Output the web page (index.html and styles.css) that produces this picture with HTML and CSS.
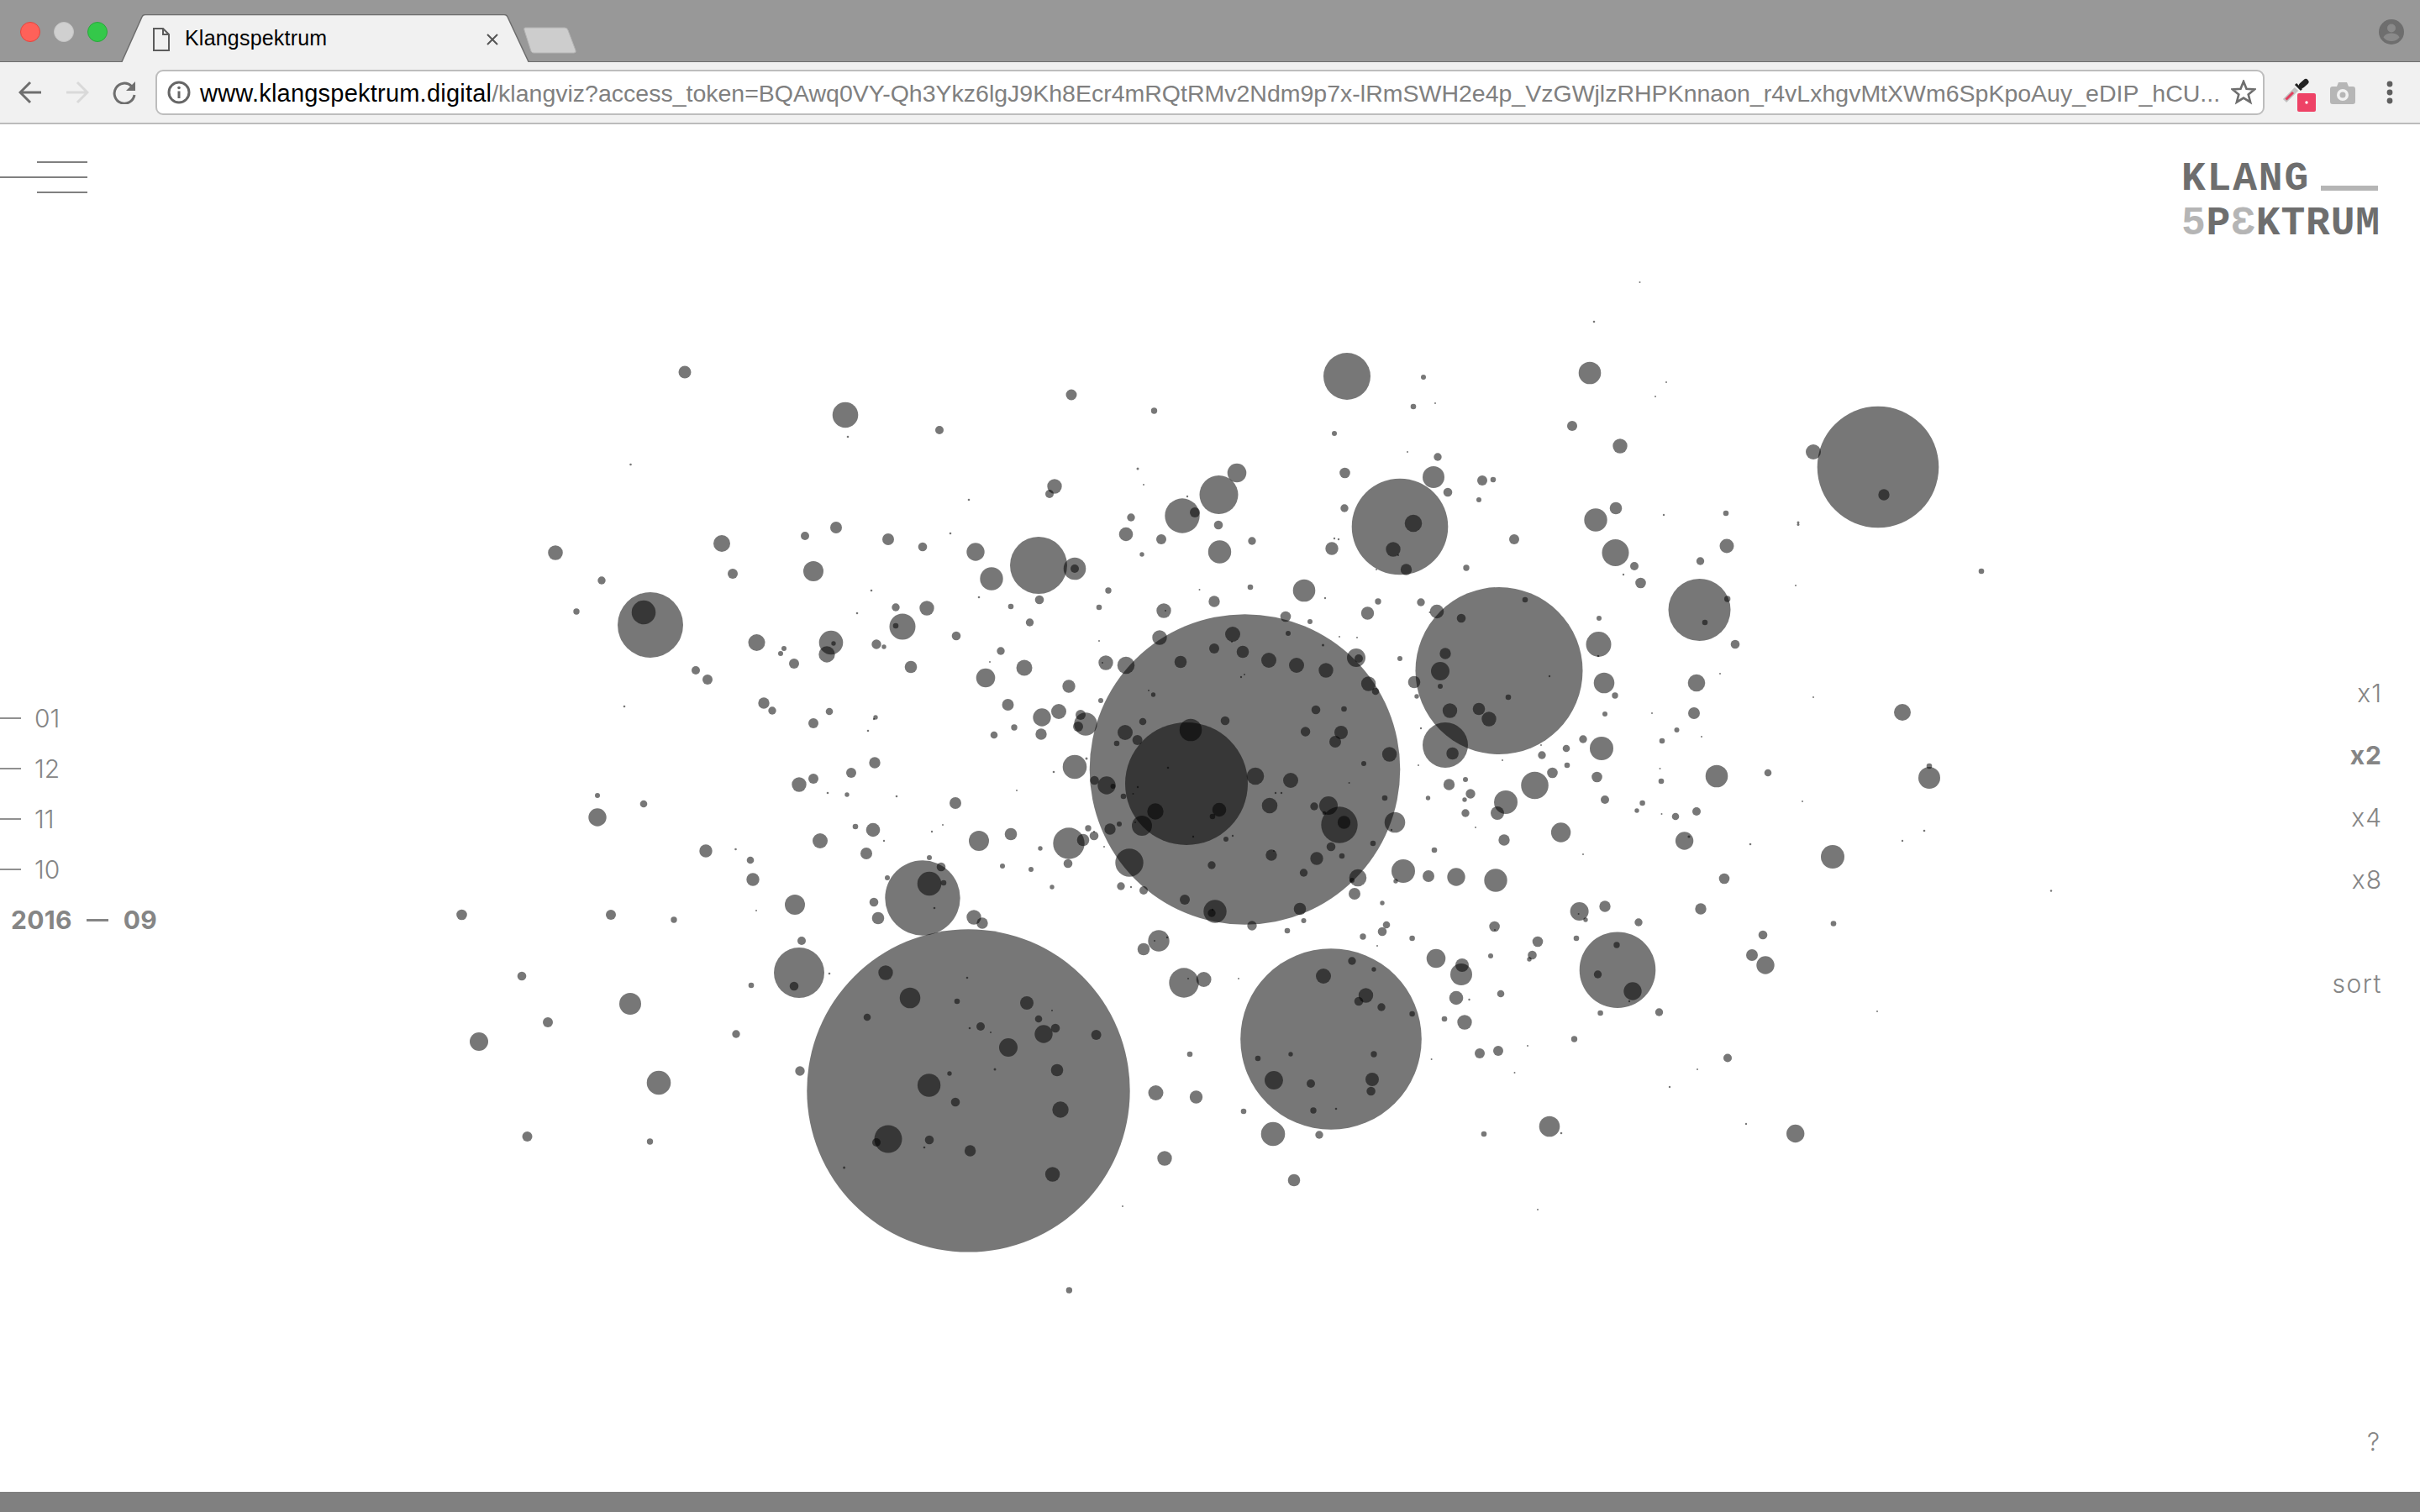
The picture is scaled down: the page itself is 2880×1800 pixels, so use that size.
FILE: index.html
```html
<!DOCTYPE html>
<html lang="en">
<head>
<meta charset="utf-8">
<title>Klangspektrum</title>
<link rel="stylesheet" href="styles.css">
</head>
<body>
<div class="window">
  <header class="tabbar">
    <div class="lights"><span class="light red"></span><span class="light grey"></span><span class="light green"></span></div>
    <div class="tab">
      <svg class="tab-shape" width="544" height="57" viewBox="0 0 544 57">
        <path class="tab-new" d="M481 16H528Q531 16 532 19L541 43Q542 46 539 46H491Q489 46 488 44L480 19Q479 16 481 16Z"/>
        <path class="tab-body" d="M0 57L1 56L25 3Q26 .5 29 .5H456Q459 .5 460 3L485 56L486 57Z"/>
        <path class="tab-edge" d="M0 56.5H1L25 3Q26 .5 29 .5H456Q459 .5 460 3L485 56.5H486"/>
      </svg>
      <svg class="tab-page" width="20" height="28" viewBox="0 0 20 28"><path d="M1 1H12L19 8V27H1ZM12 1V8H19"/></svg>
      <span class="tab-title">Klangspektrum</span>
      <svg class="tab-close" width="14" height="14" viewBox="0 0 14 14"><path d="M1 1L13 13M13 1L1 13"/></svg>
    </div>
    <svg class="profile" width="30" height="30" viewBox="0 0 30 30"><circle class="p-disc" cx="15" cy="15" r="15"/><circle class="p-cut" cx="15" cy="10.5" r="5"/><path class="p-cut" d="M5.5 21.5C7 17.5 12 16.5 15 16.5S23 17.5 24.5 21.5C22 24.5 19 26 15 26S8 24.5 5.5 21.5Z"/></svg>
  </header>
  <nav class="toolbar">
    <svg class="nav-icon" width="28" height="28" viewBox="0 0 28 28"><path d="M27 14H3M14 2L2 14L14 26"/></svg>
    <svg class="nav-icon off" width="28" height="28" viewBox="0 0 28 28"><path d="M1 14H25M14 2L26 14L14 26"/></svg>
    <svg class="nav-icon" width="28" height="28" viewBox="0 0 28 28"><path d="M22.5 6.5A12 12 0 1 0 26 17"/><path class="solid" d="M27 1V12H16Z"/></svg>
    <div class="omnibox">
      <svg class="info" width="28" height="28" viewBox="0 0 28 28"><circle cx="14" cy="14" r="12"/><path d="M14 12.5V21"/><circle class="dot" cx="14" cy="8.5" r="1.8"/></svg>
      <span class="url"><b>www.klangspektrum.digital</b>/klangviz?access_token=BQAwq0VY-Qh3Ykz6lgJ9Kh8Ecr4mRQtRMv2Ndm9p7x-lRmSWH2e4p_VzGWjlzRHPKnnaon_r4vLxhgvMtXWm6SpKpoAuy_eDIP_hCU...</span>
      <svg class="star" width="30" height="30" viewBox="0 0 30 30"><path d="M15 2L18.5 10.8L28 11.4L20.7 17.4L23.1 26.7L15 21.6L6.9 26.7L9.3 17.4L2 11.4L11.5 10.8Z"/></svg>
    </div>
    <svg class="ext" width="40" height="40" viewBox="0 0 40 40"><path class="e-glass" d="M3 27L17 13"/><path class="e-red" d="M4.500 25.500L13 17"/><path class="e-bulb" d="M23.500 8.500L28 4.500"/><path class="e-collar" d="M16 7L23 14"/><rect class="e-badge" x="18" y="18" width="22" height="22" rx="2"/><circle class="e-dot" cx="29" cy="29" r="1.700"/></svg>
    <svg class="camera" width="32" height="28" viewBox="0 0 32 28"><path d="M4 6H9L11 1H21L23 6H28Q31 6 31 9V24Q31 27 28 27H4Q1 27 1 24V9Q1 6 4 6Z"/><circle class="c-ring" cx="16" cy="16" r="7"/><circle class="c-core" cx="16" cy="16" r="3.500"/></svg>
    <svg class="kebab" width="8" height="28" viewBox="0 0 8 28"><circle cx="4" cy="4" r="3.400"/><circle cx="4" cy="14" r="3.400"/><circle cx="4" cy="24" r="3.400"/></svg>
  </nav>
  <main class="stage">
    <svg class="bubbles" width="2880" height="1628" viewBox="0 148 2880 1628">
      <circle cx="815" cy="443" r="7.500"/><circle cx="1275" cy="470" r="6.500"/><circle cx="1006" cy="494" r="15.300"/><circle cx="1118" cy="512" r="5"/><circle cx="1009" cy="520" r="1.300"/><circle cx="750.500" cy="553" r="1.300"/><circle cx="1255" cy="579" r="8.700"/><circle cx="1249" cy="588" r="5"/><circle cx="1153" cy="595" r="1.300"/><circle cx="995" cy="628" r="7"/><circle cx="958" cy="638" r="5"/><circle cx="859" cy="647" r="10"/><circle cx="661" cy="658" r="8.800"/><circle cx="1057" cy="642" r="7"/><circle cx="1098" cy="651" r="5.300"/><circle cx="1131" cy="635" r="1.300"/><circle cx="1161" cy="657" r="10.700"/><circle cx="1236" cy="673" r="34"/><circle cx="1279" cy="677" r="13.300"/><circle cx="1279" cy="677" r="5"/><circle cx="1180" cy="689" r="13.700"/><circle cx="968" cy="680" r="12"/><circle cx="872" cy="683" r="6"/><circle cx="716" cy="691" r="4.700"/><circle cx="1037" cy="703" r="1.300"/><circle cx="1165" cy="711" r="1.300"/><circle cx="1237" cy="714" r="5.300"/><circle cx="1203" cy="722" r="3.300"/><circle cx="1066" cy="723" r="4.700"/><circle cx="1103" cy="724" r="8.700"/><circle cx="1020" cy="730" r="1.300"/><circle cx="1225.500" cy="741" r="4.700"/><circle cx="774" cy="744" r="39"/><circle cx="766" cy="729" r="14.300"/><circle cx="686" cy="728" r="3.700"/><circle cx="1074" cy="746" r="15.500"/><circle cx="1066" cy="745" r="3.300"/><circle cx="1138" cy="757" r="5.300"/><circle cx="900.500" cy="765" r="10"/><circle cx="933" cy="772" r="3"/><circle cx="929" cy="778" r="3"/><circle cx="989" cy="765" r="14.300"/><circle cx="992" cy="766" r="2.700"/><circle cx="984" cy="779" r="9.700"/><circle cx="1043" cy="767" r="5.700"/><circle cx="1052" cy="770" r="2.700"/><circle cx="1191" cy="775" r="4.700"/><circle cx="945" cy="790" r="6"/><circle cx="1178" cy="788" r="1"/><circle cx="1084" cy="794" r="7.300"/><circle cx="1219" cy="795" r="9.500"/>
      <circle cx="1173" cy="807" r="11.300"/><circle cx="828" cy="798" r="5"/><circle cx="842" cy="809" r="6"/><circle cx="1272" cy="817" r="7.700"/><circle cx="909" cy="837" r="6.700"/><circle cx="919" cy="846" r="4.700"/><circle cx="987" cy="847" r="4.300"/><circle cx="743" cy="841" r="1.300"/><circle cx="1199.500" cy="839" r="7"/><circle cx="968" cy="861" r="6"/><circle cx="1042" cy="854" r="2.700"/><circle cx="1040" cy="856" r="1.200"/><circle cx="1033" cy="870" r="1.300"/><circle cx="1240" cy="854" r="10.700"/><circle cx="1260" cy="847" r="9"/><circle cx="1286" cy="851" r="6"/><circle cx="1292" cy="862" r="13.700"/><circle cx="1283" cy="865" r="6"/><circle cx="1207" cy="866" r="3.700"/><circle cx="1183" cy="875" r="4.300"/><circle cx="1239" cy="874" r="6.700"/><circle cx="1041" cy="908" r="6.700"/><circle cx="1013" cy="920" r="6"/><circle cx="968" cy="927" r="6"/><circle cx="951" cy="934" r="8.700"/><circle cx="985" cy="944" r="1.300"/><circle cx="1008" cy="946" r="2.700"/><circle cx="1067" cy="948" r="1.300"/><circle cx="1137" cy="956" r="7"/><circle cx="1210" cy="941" r="1"/><circle cx="1279" cy="913" r="14.300"/><circle cx="1293" cy="903" r="1.500"/><circle cx="1254" cy="919" r="1.300"/><circle cx="711" cy="947" r="3"/><circle cx="766" cy="957" r="4.300"/><circle cx="711" cy="973" r="10.700"/><circle cx="1018" cy="984" r="3.300"/><circle cx="1039" cy="988" r="8.300"/><circle cx="1122" cy="982" r="1"/><circle cx="1109" cy="990" r="1.200"/><circle cx="1052" cy="1001" r="1.200"/><circle cx="976" cy="1001" r="9"/><circle cx="1165" cy="1001" r="12"/><circle cx="1203" cy="993" r="7.300"/><circle cx="1272" cy="1004" r="18.700"/><circle cx="1289" cy="1000" r="7.300"/><circle cx="1295" cy="986" r="3.700"/><circle cx="1238" cy="1010" r="2.700"/><circle cx="1031" cy="1016" r="7"/><circle cx="840" cy="1013" r="7.700"/><circle cx="875.500" cy="1011" r="1.300"/><circle cx="893" cy="1024" r="4.300"/><circle cx="896" cy="1047" r="7.700"/><circle cx="1106" cy="1021" r="3"/><circle cx="1120" cy="1032" r="5.300"/><circle cx="1098" cy="1069" r="44.700"/><circle cx="1106" cy="1052" r="14.300"/><circle cx="1123" cy="1051" r="3.300"/><circle cx="1056" cy="1045" r="3"/><circle cx="1193" cy="1031" r="3"/><circle cx="1227" cy="1035" r="3"/><circle cx="1271" cy="1028" r="5.300"/><circle cx="1252" cy="1056" r="2.700"/><circle cx="1040" cy="1074" r="5.300"/><circle cx="1112" cy="1081" r="1.300"/><circle cx="1045" cy="1093" r="7.300"/><circle cx="1159" cy="1092" r="8.700"/><circle cx="1169" cy="1099" r="6.700"/><circle cx="946" cy="1077" r="12"/><circle cx="900" cy="1084" r="1"/><circle cx="549.500" cy="1089" r="6.300"/><circle cx="727" cy="1089" r="6"/><circle cx="802" cy="1095" r="3.700"/><circle cx="954" cy="1120" r="5"/><circle cx="951" cy="1158" r="30"/><circle cx="945" cy="1174" r="5.300"/><circle cx="987" cy="1159" r="1.300"/><circle cx="894" cy="1173" r="3.300"/><circle cx="621" cy="1162" r="5.300"/><circle cx="750" cy="1195" r="13"/><circle cx="652" cy="1217" r="6"/><circle cx="570" cy="1240" r="11"/><circle cx="876" cy="1231" r="4.700"/><circle cx="952" cy="1275" r="5.700"/><circle cx="784" cy="1289" r="14.300"/><circle cx="627.500" cy="1353" r="6"/><circle cx="773.500" cy="1359" r="3.700"/><circle cx="1272.400" cy="1536" r="3.700"/>
      <circle cx="1152.500" cy="1298.400" r="192.200"/><circle cx="1054" cy="1158" r="8.700"/><circle cx="1083" cy="1188" r="12.300"/><circle cx="1032" cy="1211" r="4.300"/><circle cx="1151" cy="1164" r="1.300"/><circle cx="1139" cy="1192" r="3.300"/><circle cx="1222" cy="1194" r="8"/><circle cx="1252" cy="1203" r="1"/><circle cx="1236" cy="1213" r="4.300"/><circle cx="1256" cy="1224" r="5.300"/><circle cx="1242" cy="1231" r="10.700"/><circle cx="1167" cy="1222" r="5"/><circle cx="1154" cy="1224" r="1.300"/><circle cx="1179" cy="1229" r="1"/><circle cx="1200" cy="1247" r="11"/><circle cx="1258" cy="1274" r="7.300"/><circle cx="1184" cy="1273" r="1.500"/><circle cx="1130" cy="1278" r="2.700"/><circle cx="1105.600" cy="1292" r="13.700"/><circle cx="1137" cy="1312" r="5.300"/><circle cx="1262" cy="1321" r="9.700"/><circle cx="1057" cy="1356" r="16.500"/><circle cx="1043" cy="1360" r="5"/><circle cx="1106" cy="1357" r="5.300"/><circle cx="1100" cy="1366" r="1.300"/><circle cx="1154.600" cy="1370" r="6.700"/><circle cx="1004.600" cy="1390" r="1.500"/><circle cx="1252.600" cy="1398" r="8.700"/><circle cx="1304.600" cy="1232" r="6"/>
      <circle cx="1373.500" cy="489" r="3.700"/><circle cx="1603" cy="448" r="28"/><circle cx="1694" cy="449" r="3"/><circle cx="1682" cy="484" r="3.300"/><circle cx="1708" cy="480" r="1"/><circle cx="1892" cy="444" r="13.300"/><circle cx="1951.500" cy="336" r="1"/><circle cx="1897" cy="383" r="1.300"/><circle cx="1983" cy="455" r="1"/><circle cx="1970" cy="472" r="1"/><circle cx="1871" cy="507" r="6"/><circle cx="1928" cy="531" r="8.700"/><circle cx="1588" cy="516" r="3"/><circle cx="1354" cy="558" r="1.500"/><circle cx="1361" cy="577" r="1"/><circle cx="1472" cy="563" r="11.300"/><circle cx="1450.500" cy="589" r="23"/><circle cx="1413" cy="591" r="1.200"/><circle cx="1407" cy="614" r="20.700"/><circle cx="1422" cy="610" r="6"/><circle cx="1346" cy="616" r="4.700"/><circle cx="1340" cy="636" r="8.300"/><circle cx="1382" cy="642" r="6"/><circle cx="1450" cy="625" r="5.300"/><circle cx="1490" cy="644" r="4.700"/><circle cx="1451.500" cy="657" r="13.700"/><circle cx="1359" cy="660" r="2.700"/><circle cx="1675" cy="538" r="1"/><circle cx="1711" cy="544" r="4.700"/><circle cx="1706" cy="568" r="13"/><circle cx="1723" cy="586" r="5.300"/><circle cx="1600.500" cy="563" r="6.300"/><circle cx="1764" cy="572" r="6"/><circle cx="1777" cy="571" r="3.300"/><circle cx="1760" cy="595" r="3"/><circle cx="1666" cy="627" r="57.300"/><circle cx="1682" cy="623" r="10.300"/><circle cx="1658" cy="654" r="8.700"/><circle cx="1664" cy="661" r="1"/><circle cx="1673.500" cy="678" r="6.700"/><circle cx="1600" cy="605" r="4.700"/><circle cx="1588" cy="641" r="1.200"/><circle cx="1593" cy="642" r="1.200"/><circle cx="1585" cy="653" r="7.700"/><circle cx="1638" cy="678" r="1"/><circle cx="1745" cy="676" r="3.700"/><circle cx="1802" cy="642" r="6"/><circle cx="1899" cy="619" r="13.700"/><circle cx="1923" cy="605" r="7.300"/><circle cx="1980" cy="613" r="1.200"/><circle cx="1922.500" cy="658" r="16"/><circle cx="1945" cy="674" r="5"/><circle cx="1932" cy="684" r="1.200"/><circle cx="1952.500" cy="694" r="6.300"/><circle cx="2023.500" cy="668" r="4.700"/><circle cx="2022.500" cy="726" r="37"/><circle cx="2029" cy="741" r="3.300"/><circle cx="1319" cy="703" r="3.700"/><circle cx="1308" cy="723" r="3.300"/><circle cx="1427.500" cy="702" r="1"/><circle cx="1488" cy="699" r="3.300"/><circle cx="1552" cy="703" r="13.300"/><circle cx="1577" cy="712" r="1.200"/><circle cx="1445" cy="716" r="6.700"/><circle cx="1385" cy="727" r="8.700"/><circle cx="1387" cy="727" r="1"/><circle cx="1530" cy="734" r="6.300"/><circle cx="1559" cy="740" r="3"/><circle cx="1640" cy="716" r="3.700"/><circle cx="1627.500" cy="730" r="7.700"/><circle cx="1691" cy="717" r="4.700"/><circle cx="1710" cy="728" r="8.300"/><circle cx="1701.500" cy="729" r="1"/><circle cx="1739" cy="736" r="5.300"/><circle cx="1815" cy="714" r="3.300"/><circle cx="1903" cy="736" r="3"/><circle cx="1902.500" cy="767" r="15"/><circle cx="1902" cy="781" r="1.300"/><circle cx="1308" cy="763" r="1"/><circle cx="1533" cy="754" r="3"/><circle cx="1467" cy="755" r="9"/><circle cx="1466" cy="764" r="1"/><circle cx="1445" cy="772" r="6"/><circle cx="1479" cy="776" r="7.300"/><circle cx="1380" cy="759" r="8.700"/><circle cx="1574.500" cy="768" r="1.600"/><circle cx="1594" cy="758" r="1"/><circle cx="1615" cy="759" r="1"/><circle cx="1614" cy="783" r="11"/><circle cx="1617" cy="784" r="5"/><circle cx="1405" cy="788" r="7.300"/><circle cx="1510" cy="786" r="9"/><circle cx="1543" cy="792" r="9"/><circle cx="1578" cy="798" r="8.700"/><circle cx="1316" cy="789" r="8.700"/><circle cx="1312" cy="789" r="1"/><circle cx="1340" cy="792" r="10.300"/><circle cx="1666" cy="784" r="3"/><circle cx="1720" cy="778" r="6.700"/><circle cx="1714" cy="799" r="11"/>
      <circle cx="1481.500" cy="916" r="184.800"/><circle cx="1784" cy="798.500" r="99.500"/><circle cx="1310" cy="834" r="3"/><circle cx="1367" cy="822" r="1"/><circle cx="1372.500" cy="827" r="2.700"/><circle cx="1481" cy="803" r="1"/><circle cx="1477" cy="806" r="1.200"/><circle cx="1628.600" cy="814" r="8.700"/><circle cx="1637" cy="823" r="4.300"/><circle cx="1683" cy="812" r="7.300"/><circle cx="1714" cy="817" r="3"/><circle cx="1686" cy="829" r="2.700"/><circle cx="1844" cy="805" r="1.200"/><circle cx="1795" cy="830" r="3.300"/><circle cx="1725.500" cy="846" r="8.700"/><circle cx="1760" cy="844" r="7.300"/><circle cx="1772" cy="856" r="8.700"/><circle cx="1720" cy="887" r="27"/><circle cx="1728.600" cy="897" r="7.300"/><circle cx="1691" cy="867" r="1.200"/><circle cx="1909" cy="813" r="12.300"/><circle cx="1922" cy="828" r="3.700"/><circle cx="1910" cy="850" r="3"/><circle cx="1966" cy="849" r="1"/><circle cx="2019" cy="813" r="10.300"/><circle cx="2047" cy="802" r="1"/><circle cx="2016" cy="849" r="7"/><circle cx="1995.500" cy="869" r="3"/><circle cx="2025" cy="877" r="1"/><circle cx="1978" cy="882" r="3.300"/><circle cx="1906" cy="891" r="14"/><circle cx="1884" cy="880" r="4.700"/><circle cx="1864" cy="891" r="4.300"/><circle cx="1835" cy="899" r="4.700"/><circle cx="1834" cy="887" r="1"/><circle cx="1865" cy="911" r="3.300"/><circle cx="1847.500" cy="920" r="6.300"/><circle cx="1826.500" cy="935" r="16.300"/><circle cx="1788" cy="905" r="1"/><circle cx="1688" cy="911" r="1"/><circle cx="1724.500" cy="934" r="6.700"/><circle cx="1744" cy="928" r="3"/><circle cx="1750" cy="945" r="5.700"/><circle cx="1743" cy="952" r="2.700"/><circle cx="1699.500" cy="950" r="2.700"/><circle cx="1792" cy="955" r="14"/><circle cx="1782" cy="968" r="8"/><circle cx="1744" cy="968" r="4.700"/><circle cx="1756" cy="985" r="1"/><circle cx="1790" cy="1000" r="6.700"/><circle cx="1857.600" cy="991" r="11.700"/><circle cx="1900.500" cy="925" r="6.300"/><circle cx="1910" cy="952" r="5"/><circle cx="1884" cy="1017" r="1"/><circle cx="1975.500" cy="915" r="1"/><circle cx="1977" cy="930" r="3.300"/><circle cx="1954.600" cy="956" r="3.300"/><circle cx="1948" cy="965" r="2.700"/><circle cx="1977.500" cy="969" r="1"/><circle cx="1994" cy="972" r="4.300"/><circle cx="2019" cy="966" r="5"/><circle cx="2043" cy="924" r="13.300"/><circle cx="2004.600" cy="1001" r="10.700"/><circle cx="2010" cy="996" r="1.600"/><circle cx="1707" cy="1012" r="3.300"/><circle cx="1670" cy="1037" r="14"/><circle cx="1700" cy="1043" r="7"/><circle cx="1733" cy="1044" r="10.700"/><circle cx="1780" cy="1048" r="13.700"/><circle cx="1661" cy="1049" r="2.700"/><circle cx="1616" cy="1045" r="10.300"/><circle cx="1609" cy="1048" r="3"/><circle cx="1612" cy="1064" r="7"/>
      <circle cx="1339" cy="872" r="9"/><circle cx="1360" cy="859" r="4.300"/><circle cx="1353.600" cy="881" r="6"/><circle cx="1329" cy="885" r="3.300"/><circle cx="1458" cy="858" r="5.300"/><circle cx="1417" cy="869" r="13.300"/><circle cx="1566" cy="845" r="5.300"/><circle cx="1599.500" cy="844" r="3.300"/><circle cx="1553.600" cy="871" r="5.700"/><circle cx="1596" cy="872" r="8"/><circle cx="1589" cy="883" r="7"/><circle cx="1653.600" cy="898" r="8.700"/><circle cx="1623" cy="909" r="3"/><circle cx="1605.600" cy="932" r="1"/><circle cx="1412" cy="933" r="73"/><circle cx="1390" cy="914" r="1.300"/><circle cx="1317" cy="935" r="10.700"/><circle cx="1324.500" cy="936" r="3"/><circle cx="1302.500" cy="929" r="5.300"/><circle cx="1494" cy="924" r="10.300"/><circle cx="1536" cy="929" r="9"/><circle cx="1354" cy="937" r="1.200"/><circle cx="1348.500" cy="945" r="1"/><circle cx="1337" cy="948" r="3.300"/><circle cx="1518" cy="944" r="1.200"/><circle cx="1525" cy="944" r="1.200"/><circle cx="1511" cy="959" r="9.300"/><circle cx="1375" cy="966" r="9.700"/><circle cx="1451" cy="964" r="8.300"/><circle cx="1443" cy="972" r="3.300"/><circle cx="1359" cy="983" r="12"/><circle cx="1351" cy="979" r="1"/><circle cx="1332" cy="981" r="3"/><circle cx="1321" cy="987" r="6.700"/><circle cx="1302" cy="995" r="5.300"/><circle cx="1302" cy="990" r="1"/><circle cx="1314" cy="1008" r="1"/><circle cx="1581" cy="959" r="11"/><circle cx="1564" cy="960" r="4.700"/><circle cx="1576" cy="968" r="2.300"/><circle cx="1594" cy="982" r="21.700"/><circle cx="1599.500" cy="979" r="7.700"/><circle cx="1648" cy="950" r="3.300"/><circle cx="1660" cy="979" r="12.300"/><circle cx="1656" cy="988" r="1.200"/><circle cx="1634" cy="1004" r="3.300"/><circle cx="1584" cy="1008" r="5.300"/><circle cx="1597" cy="1019" r="3.300"/><circle cx="1567" cy="1022" r="7.700"/><circle cx="1513" cy="1018" r="6.700"/><circle cx="1516" cy="1013" r="1"/><circle cx="1420" cy="996" r="1.200"/><circle cx="1459" cy="999" r="3"/><circle cx="1467" cy="995" r="1.200"/><circle cx="1442" cy="1030" r="4.700"/><circle cx="1344" cy="1027" r="16.700"/><circle cx="1334" cy="1055" r="4.700"/><circle cx="1346" cy="1056" r="1.200"/><circle cx="1361" cy="1060" r="5"/><circle cx="1410" cy="1071" r="6"/><circle cx="1551.500" cy="1039" r="4.700"/><circle cx="1446" cy="1085" r="13.700"/><circle cx="1442" cy="1087" r="4.700"/><circle cx="1443" cy="1083" r="1.200"/><circle cx="1547" cy="1082" r="7.300"/><circle cx="1490" cy="1102" r="5.700"/><circle cx="1551.500" cy="1096" r="3"/><circle cx="1532" cy="1108" r="3.300"/><circle cx="1645" cy="1075" r="2.700"/><circle cx="1650" cy="1101" r="4.300"/><circle cx="1645" cy="1109" r="5.300"/><circle cx="1622" cy="1115" r="3.700"/><circle cx="1639" cy="1126" r="1"/><circle cx="1680.600" cy="1117" r="3.300"/><circle cx="1379" cy="1120" r="12.700"/><circle cx="1361" cy="1130" r="7.300"/><circle cx="1374" cy="1120" r="1"/><circle cx="1389" cy="1116" r="1.200"/><circle cx="1409" cy="1170" r="17.700"/><circle cx="1432.600" cy="1166" r="9"/><circle cx="1414" cy="1165" r="1"/><circle cx="1474" cy="1165" r="1"/>
      <circle cx="1584" cy="1237" r="107.800"/><circle cx="1609" cy="1144" r="4.700"/><circle cx="1635" cy="1154" r="2.700"/><circle cx="1575" cy="1162" r="9"/><circle cx="1625.500" cy="1185" r="8.700"/><circle cx="1617" cy="1192" r="5.300"/><circle cx="1644" cy="1199" r="4.700"/><circle cx="1680.600" cy="1207" r="3.300"/><circle cx="1635" cy="1255" r="3.700"/><circle cx="1536" cy="1255" r="2.700"/><circle cx="1497" cy="1260" r="3.300"/><circle cx="1516" cy="1286" r="11"/><circle cx="1560" cy="1290" r="5"/><circle cx="1633" cy="1285" r="8"/><circle cx="1631.600" cy="1299" r="5.300"/><circle cx="1563" cy="1322" r="3.700"/><circle cx="1590" cy="1320" r="1.300"/><circle cx="1709" cy="1141" r="11.300"/><circle cx="1740" cy="1149" r="8"/><circle cx="1739" cy="1160" r="13"/><circle cx="1733" cy="1188" r="8.300"/><circle cx="1748.500" cy="1190" r="1.200"/><circle cx="1786" cy="1183" r="4.300"/><circle cx="1719" cy="1213" r="3.300"/><circle cx="1743" cy="1217" r="8.700"/><circle cx="1778.600" cy="1103" r="6.300"/><circle cx="1779" cy="1107" r="1"/><circle cx="1830" cy="1121" r="6.300"/><circle cx="1823.500" cy="1137" r="5.300"/><circle cx="1820" cy="1142" r="2.700"/><circle cx="1774" cy="1138" r="3"/><circle cx="1876" cy="1117" r="3.300"/><circle cx="1879.600" cy="1085" r="11"/><circle cx="1878.600" cy="1088" r="1"/><circle cx="1887" cy="1095" r="2.700"/><circle cx="1910" cy="1079" r="6.700"/><circle cx="1950" cy="1098" r="4.700"/><circle cx="2024" cy="1082" r="6.700"/><circle cx="1925" cy="1154.700" r="45.300"/><circle cx="1924" cy="1125" r="3.700"/><circle cx="1901.500" cy="1160" r="4.700"/><circle cx="1943" cy="1180" r="10.700"/><circle cx="1939" cy="1192" r="1.200"/><circle cx="1904.600" cy="1206" r="3.300"/><circle cx="1974.500" cy="1205" r="4.700"/><circle cx="1873.500" cy="1237" r="3.700"/><circle cx="1818" cy="1245" r="1"/><circle cx="1783" cy="1251" r="6"/><circle cx="1761" cy="1254" r="6"/><circle cx="1703.600" cy="1261" r="1"/><circle cx="1802.500" cy="1277" r="1"/><circle cx="2020" cy="1273" r="1"/><circle cx="1416" cy="1255" r="3.300"/>
      <circle cx="1375.500" cy="1301" r="9"/><circle cx="1423.500" cy="1306" r="7.700"/><circle cx="1480" cy="1323" r="3.300"/><circle cx="1515" cy="1350" r="14.300"/><circle cx="1570" cy="1351" r="4.700"/><circle cx="1386" cy="1379" r="8.700"/><circle cx="1540" cy="1405" r="7.300"/><circle cx="1336" cy="1436" r="1"/><circle cx="1766" cy="1350" r="3.300"/><circle cx="1844" cy="1341" r="12.300"/><circle cx="1858" cy="1349" r="1.300"/><circle cx="1830" cy="1440" r="1"/>
      <circle cx="2158" cy="538" r="9"/><circle cx="2235" cy="556" r="72.300"/><circle cx="2242" cy="589" r="6.700"/><circle cx="2054" cy="611" r="3.300"/><circle cx="2055" cy="650" r="8.500"/><circle cx="2140" cy="622" r="1.500"/><circle cx="2140" cy="624.500" r="1.500"/><circle cx="2137" cy="697" r="1"/><circle cx="2358" cy="680" r="3.300"/><circle cx="2055.700" cy="713" r="3.700"/><circle cx="2065" cy="767" r="5.300"/><circle cx="2158" cy="830" r="1"/><circle cx="2264" cy="848" r="10"/><circle cx="2104" cy="920" r="4.300"/><circle cx="2296" cy="926" r="13"/><circle cx="2296" cy="912" r="3.300"/><circle cx="2145" cy="954" r="1"/><circle cx="2083" cy="1005" r="1.300"/><circle cx="2290" cy="989" r="1.300"/><circle cx="2264" cy="1001" r="1.200"/><circle cx="2181" cy="1020" r="14"/><circle cx="2052" cy="1046" r="6.300"/><circle cx="2441" cy="1060.500" r="1.200"/><circle cx="2182" cy="1099.500" r="3.300"/><circle cx="2098" cy="1113" r="5.300"/><circle cx="2085" cy="1137" r="7"/><circle cx="2101" cy="1149" r="10.700"/><circle cx="2234" cy="1204" r="1"/><circle cx="2056" cy="1259.500" r="5"/><circle cx="1987" cy="1294" r="1.200"/><circle cx="2078" cy="1338" r="1.200"/><circle cx="2136.700" cy="1349.500" r="10.700"/>
    </svg>
    <div class="hud">
      <div class="hud-left">
        <div class="menu"><span class="bar"></span><span class="bar long"></span><span class="bar"></span></div>
        <ul class="months">
          <li class="month"><i class="dash"></i><span class="num">01</span></li>
          <li class="month"><i class="dash"></i><span class="num">12</span></li>
          <li class="month"><i class="dash"></i><span class="num">11</span></li>
          <li class="month"><i class="dash"></i><span class="num">10</span></li>
          <li class="month current"><span>2016</span><i class="dash-bold"></i><span class="num">09</span></li>
        </ul>
      </div>
      <div class="hud-right">
        <div class="logo">
          <div class="logo-line">KLANG<i class="logo-rule"></i></div>
          <div class="logo-line tight"><span class="faint">5</span>P<span class="faint">Ɛ</span>KTRUM</div>
        </div>
        <ul class="speeds">
          <li>x1</li>
          <li class="active">x2</li>
          <li>x4</li>
          <li>x8</li>
        </ul>
        <div class="sort">sort</div>
        <div class="help">?</div>
      </div>
    </div>
  </main>
  <footer class="statusbar"></footer>
</div>
</body>
</html>
```

FILE: styles.css
```css
* { box-sizing: border-box; }
html, body { margin: 0; padding: 0; height: 100%; overflow: hidden; background: #fff; }
.window { display: flex; flex-direction: column; width: 2880px; height: 1800px; font-family: "Liberation Sans", Arial, sans-serif; }

/* title bar */
.tabbar { display: flex; align-items: flex-start; height: 74px; flex: none; background: #989898; box-shadow: inset 0 -1px 0 #6d6d6d; }
.lights { display: flex; gap: 16px; padding: 26px 0 0 24px; width: 144px; flex: none; }
.light { width: 24px; height: 24px; border-radius: 50%; border: 1px solid; }
.red { background: #ff6159; border-color: #e2463f; }
.grey { background: #d0d0d0; border-color: #c4c4c4; }
.green { background: #34c84a; border-color: #2aa83c; }
.tab { position: relative; display: flex; align-items: center; width: 544px; height: 57px; margin-top: 17px; padding: 0 36px 0 38px; flex: none; }
.tab-shape { position: absolute; left: 0; top: 0; }
.tab-new { fill: #cdcdcd; stroke: #b4b4b4; stroke-width: 1; }
.tab-body { fill: #f1f1f1; }
.tab-edge { fill: none; stroke: #6d6d6d; stroke-width: 1.500; }
.tab-page { position: relative; flex: none; margin-top: 2px; }
.tab-page path { fill: none; stroke: #5c5c5c; stroke-width: 2; }
.tab-title { position: relative; margin-left: 18px; font-size: 25px; letter-spacing: .2px; color: #000; flex: 1; white-space: nowrap; }
.tab-close { position: relative; flex: none; margin: 2px 59px 0 0; }
.tab-close path { fill: none; stroke: #555; stroke-width: 2; }
.profile { margin: 23px 19px 0 auto; flex: none; }
.p-disc { fill: #6e6e6e; }
.p-cut { fill: #8a8a8a; }

/* toolbar */
.toolbar { display: flex; align-items: center; height: 74px; flex: none; padding: 0 32px 1px 22px; background: #f1f1f1; border-bottom: 2px solid #bcbcbc; }
.nav-icon { flex: none; margin-right: 28px; }
.nav-icon path { fill: none; stroke: #6e6e6e; stroke-width: 3; }
.nav-icon .solid { fill: #6e6e6e; stroke: none; }
.nav-icon.off path { stroke: #d9d9d9; }
.nav-icon:nth-of-type(3) { margin-right: 23px; }
.omnibox { display: flex; align-items: center; flex: 1; min-width: 0; height: 54px; padding: 0 8px 0 12px; background: #fff; border: 2px solid #bdbdbd; border-radius: 9px; }
.info { flex: none; }
.info circle { fill: none; stroke: #666; stroke-width: 3; }
.info path { fill: none; stroke: #666; stroke-width: 3; }
.info .dot { fill: #666; stroke: none; }
.url { flex: 1; min-width: 0; margin: 3px 0 0 11px; font-size: 28.500px; color: #808080; white-space: nowrap; }
.url b { font-weight: 400; font-size: 29px; letter-spacing: .22px; color: #000; }
.star { flex: none; margin-left: 0; }
.star path { fill: none; stroke: #6e6e6e; stroke-width: 2.600; }
.ext { flex: none; margin: 7px 0 0 21px; }
.e-glass { fill: none; stroke: #c2c2c2; stroke-width: 6; }
.e-red { fill: none; stroke: #e23f5f; stroke-width: 3; }
.e-bulb { fill: none; stroke: #222; stroke-width: 7; stroke-linecap: round; }
.e-collar { fill: none; stroke: #222; stroke-width: 3; }
.e-badge { fill: #ee4266; }
.e-dot { fill: #fff; }
.camera { flex: none; margin: 2px 0 0 16px; }
.camera path { fill: #b6b6b6; }
.c-ring { fill: #f1f1f1; }
.c-core { fill: #b6b6b6; }
.kebab { flex: none; margin-left: 36px; }
.kebab circle { fill: #5f5f5f; }

/* page */
.stage { position: relative; flex: 1; min-height: 0; background: #fff; }
.bubbles { position: absolute; left: 0; top: 0; }
.bubbles circle { fill: #000; fill-opacity: .535; }
.hud { position: relative; display: flex; justify-content: space-between; height: 100%; color: #858585; font-family: Inter, "Liberation Sans", sans-serif; font-weight: 300; font-size: 30px; }
.hud-left { display: flex; flex-direction: column; }
.menu { display: flex; flex-direction: column; align-items: flex-end; gap: 16px; width: 104px; padding-top: 44px; }
.bar { display: block; width: 60px; height: 2px; background: #808080; }
.bar.long { width: 104px; }
.months { list-style: none; margin: 595px 0 0; padding: 0; display: flex; flex-direction: column; }
.month { display: flex; align-items: center; height: 60px; }
.dash { display: block; width: 25px; height: 2px; margin-right: 16px; background: #909090; }
.month.current { padding-left: 13px; font-weight: 700; letter-spacing: .3px; }
.dash-bold { display: block; width: 26px; height: 3px; margin: 0 18px 0 17px; background: #858585; }
.hud-right { display: flex; flex-direction: column; align-items: flex-end; padding-right: 45px; }
.logo { width: 238px; margin: 39px 1px 0 0; font-family: "Liberation Mono", monospace; font-weight: 700; font-size: 48px; line-height: 53px; letter-spacing: 1.800px; color: #6e6e6e; }
.logo-line { display: flex; align-items: center; white-space: nowrap; }
.logo-line.tight { letter-spacing: .8px; }
.faint { color: #b5b5b5; }
.logo-rule { display: block; width: 68px; height: 6px; margin: 20px 0 0 13px; background: #b5b5b5; }
.speeds { list-style: none; margin: 495px 0 0; padding: 0; display: flex; flex-direction: column; align-items: flex-end; gap: 0; }
.speeds li { height: 74px; line-height: 74px; letter-spacing: 1px; }
.speeds .active { font-weight: 700; }
.sort { margin-top: 50px; line-height: 74px; letter-spacing: 1.500px; }
.help { margin: 488px 3px 0 0; line-height: 40px; }
.statusbar { height: 24px; flex: none; background: #808080; }
```
